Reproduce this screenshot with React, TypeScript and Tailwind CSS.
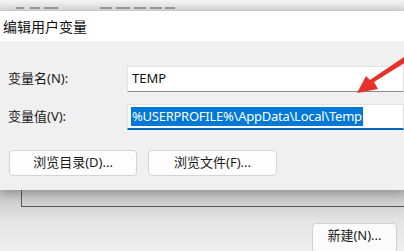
const CJK = "font-['Segoe_UI','Noto_Sans','Noto_Sans_CJK_SC',sans-serif]";

// blurred bottoms of the parent window's heading, mostly hidden behind the dialog
const FRAGMENTS = [
  { left: 16, width: 8 }, { left: 30, width: 10 }, { left: 44, width: 14 },
  { left: 100, width: 12 }, { left: 116, width: 14 }, { left: 134, width: 12 },
  { left: 150, width: 12 }, { left: 165, width: 10 },
];

function Arrow() {
  return (
    <svg className="absolute left-0 top-0 z-20" width="404" height="251" viewBox="0 0 404 251">
      <path d="M404 57 L406 62 L374 82 L378 89 L357 93 L366 76 L370 80 Z" fill="#e8302a" />
    </svg>
  );
}

export default function App() {
  return (
    <div className={`relative h-[251px] w-[404px] overflow-hidden bg-[#e6e6e6] ${CJK}`}>
      {/* parent window peeking above */}
      <div className="relative h-[10px] overflow-hidden bg-gradient-to-b from-[#f4f4f4] to-[#dcdcdc]">
        {FRAGMENTS.map((f) => (
          <div
            key={f.left}
            className="absolute top-[7px] h-[2px] bg-[#9a9a9a] blur-[0.7px]"
            style={{ left: f.left, width: f.width }}
          />
        ))}
      </div>

      {/* dialog */}
      <div className="relative z-10 h-[180px] border-t border-[#c9c9c9] shadow-[0_4px_10px_rgba(0,0,0,0.25)]">
        <div className="flex h-[30px] items-center bg-white pl-[3px] text-[14px] text-[#111]">编辑用户变量</div>
        <div className="h-[149px] bg-[#f0f0f0] pt-[25px]">
          <div className="flex items-center">
            <div className="w-[127px] pl-[8px] text-[13px] text-[#1a1a1a]">变量名(N):</div>
            <div className="flex h-[26px] flex-1 items-center border border-[#e2e2e2] border-b-[#8a8a8a] bg-white pl-[4px] text-[13px] text-[#111]">
              TEMP
            </div>
          </div>
          <div className="mt-[12px] flex items-center">
            <div className="w-[127px] pl-[8px] text-[13px] text-[#1a1a1a]">变量值(V):</div>
            <div className="flex h-[26px] flex-1 items-center border border-b-2 border-[#e2e2e2] border-b-[#0067c0] bg-white pl-[3px] text-[13px]">
              <span className="bg-[#0078d7] px-[1px] leading-[19px] tracking-[-0.25px] text-white">
                %USERPROFILE%\AppData\Local\Temp
              </span>
            </div>
          </div>
          <div className="mt-[20px] flex gap-[11px] pl-[9px]">
            <button className="h-[26px] w-[128px] rounded-[4px] border border-[#d4d4d4] bg-[#fdfdfd] text-[13px] text-[#1a1a1a]">
              浏览目录(D)...
            </button>
            <button className="h-[26px] w-[129px] rounded-[4px] border border-[#d4d4d4] bg-[#fdfdfd] text-[13px] text-[#1a1a1a]">
              浏览文件(F)...
            </button>
          </div>
        </div>
      </div>

      {/* parent window below */}
      <div className="h-[61px] bg-gradient-to-b from-[#c4c4c4] via-[#e4e4e4] to-[#efefef] pl-[21px]">
        <div className="h-[17px] border-b border-l border-[#555]" />
        <div className="flex justify-end pr-[7px] pt-[16px]">
          <button className="h-[30px] w-[85px] rounded-[4px] border border-[#d0d0d0] bg-[#fbfbfb] pb-[4px] text-[13px] text-[#1a1a1a]">
            新建(N)...
          </button>
        </div>
      </div>

      <Arrow />
    </div>
  );
}
